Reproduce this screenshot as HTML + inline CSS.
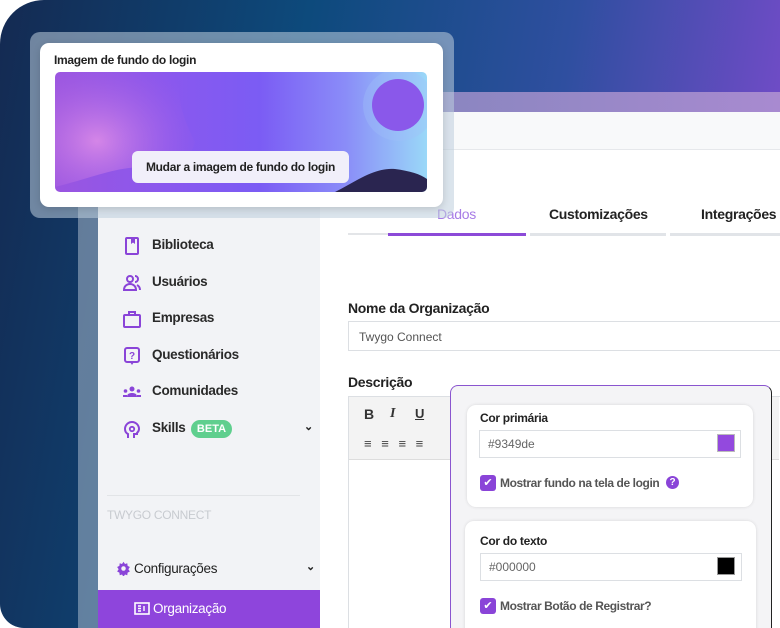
<!DOCTYPE html>
<html><head><meta charset="utf-8"><style>
*{box-sizing:border-box;margin:0;padding:0}
html,body{width:780px;height:628px;overflow:hidden}
body{background:#fff;font-family:"Liberation Sans",sans-serif;position:relative}
.bg{position:absolute;left:0;top:0;width:780px;height:628px;border-radius:44px 0 0 24px;background:linear-gradient(100deg,#142a52 0%,#0d4a7c 35%,#2f4fa0 65%,#8a4ad6 100%)}
.frame{position:absolute;left:78px;top:92px;width:702px;height:536px;background:rgba(200,210,225,.45)}
.band{position:absolute;left:98px;top:92px;width:682px;height:20px;background:linear-gradient(90deg,#6f8fb4,#8a86c0 50%,#a88ad0)}
.side{position:absolute;left:98px;top:112px;width:222px;height:516px;background:#f2f3f6}
.main{position:absolute;left:320px;top:112px;width:460px;height:516px;background:#fff}
.hdr{position:absolute;left:320px;top:112px;width:460px;height:38px;background:#f8f9fa;border-bottom:1px solid #e6e8eb}
.t{position:absolute;white-space:nowrap;color:#222;font-size:14px;font-weight:bold;letter-spacing:-0.3px}
.ico{position:absolute;left:122px;width:20px;height:20px}
.it{position:absolute;left:152px;font-size:13.5px;font-weight:bold;color:#2a2a2a;letter-spacing:-0.3px;white-space:nowrap}
.popout{position:absolute;left:30px;top:32px;width:424px;height:186px;border-radius:10px;background:rgba(190,205,220,.55)}
.pop{position:absolute;left:40px;top:43px;width:403px;height:164px;border-radius:9px;background:#fff;box-shadow:0 2px 8px rgba(0,0,0,.15)}
.img{position:absolute;left:55px;top:72px;width:372px;height:120px;border-radius:5px;overflow:hidden;background:linear-gradient(90deg,#9a55e0 0%,#8a58ee 30%,#7b5cf4 55%,#8a8cf8 78%,#9ad8f8 100%)}
.btn{position:absolute;left:132px;top:151px;width:217px;height:32px;border-radius:6px;background:#f1effa;font-size:12px;font-weight:bold;color:#222;text-align:center;line-height:32px;letter-spacing:-0.3px}
.inp{position:absolute;background:#fff;border:1px solid #dcdfe3;font-size:12px;color:#555}
.card{position:absolute;background:#fff;border-radius:9px;box-shadow:0 0 3px rgba(0,0,0,.12)}
.cb{position:absolute;width:16px;height:16px;border-radius:3px;background:#8a44d8;color:#fff;font-size:11px;text-align:center;line-height:16px}
</style></head><body>
<div class="bg"></div>
<div class="frame"></div>
<div class="band"></div>
<div class="side"></div>
<div class="main"></div>
<div class="hdr"></div>

<div class="t" style="left:437px;top:206px;color:#a77be6;font-weight:normal">Dados</div>
<div class="t" style="left:549px;top:206px">Customizações</div>
<div class="t" style="left:701px;top:206px">Integrações</div>
<div style="position:absolute;left:348px;top:233px;width:40px;height:2px;background:#e3e5e8"></div>
<div style="position:absolute;left:388px;top:233px;width:138px;height:3px;background:#8c4ad8"></div>
<div style="position:absolute;left:530px;top:233px;width:136px;height:3px;background:#e1e4e8"></div>
<div style="position:absolute;left:670px;top:233px;width:110px;height:3px;background:#e1e4e8"></div>

<svg class="ico" style="top:236px" viewBox="0 0 20 20"><rect x="4" y="2" width="12" height="16" rx="1" fill="none" stroke="#8a44d8" stroke-width="2"/><path d="M9 2v6l2-1.5 2 1.5V2" fill="#8a44d8"/></svg>
<div class="it" style="top:237px">Biblioteca</div>
<svg class="ico" style="top:273px" viewBox="0 0 20 20"><circle cx="8" cy="6" r="3" fill="none" stroke="#8a44d8" stroke-width="2"/><path d="M2 17c0-4 3-6 6-6s6 2 6 6z M13 3a3 3 0 010 6 M15 12c2 1 3 3 3 5" fill="none" stroke="#8a44d8" stroke-width="2"/></svg>
<div class="it" style="top:274px">Usuários</div>
<svg class="ico" style="top:309px" viewBox="0 0 20 20"><rect x="2" y="6" width="16" height="12" rx="1" fill="none" stroke="#8a44d8" stroke-width="2"/><path d="M7 6V3h6v3" fill="none" stroke="#8a44d8" stroke-width="2"/></svg>
<div class="it" style="top:310px">Empresas</div>
<svg class="ico" style="top:346px" viewBox="0 0 20 20"><rect x="3" y="2" width="14" height="14" rx="2" fill="none" stroke="#8a44d8" stroke-width="2"/><path d="M8 16l2 3 2-3" fill="#8a44d8"/><text x="10" y="13" font-size="10" text-anchor="middle" fill="#8a44d8" font-weight="bold" font-family="Liberation Sans">?</text></svg>
<div class="it" style="top:347px">Questionários</div>
<svg class="ico" style="top:382px" viewBox="0 0 20 20"><circle cx="10" cy="7" r="2.5" fill="#8a44d8"/><circle cx="3.5" cy="9" r="1.8" fill="#8a44d8"/><circle cx="16.5" cy="9" r="1.8" fill="#8a44d8"/><path d="M5 15c0-3 2-4 5-4s5 1 5 4z" fill="#8a44d8"/><rect x="1" y="13" width="4" height="2" fill="#8a44d8"/><rect x="15" y="13" width="4" height="2" fill="#8a44d8"/></svg>
<div class="it" style="top:383px">Comunidades</div>
<svg class="ico" style="top:420px" viewBox="0 0 20 20"><path d="M6 18v-4c-2-1-3-3-3-5a7 7 0 0114 0c0 2-1 3-2 4v1h-3v4" fill="none" stroke="#8a44d8" stroke-width="2"/><circle cx="10" cy="9" r="2.2" fill="none" stroke="#8a44d8" stroke-width="1.8"/></svg>
<div class="it" style="top:420px">Skills</div>
<div style="position:absolute;left:191px;top:420px;width:41px;height:18px;border-radius:9px;background:#5fcf8e;color:#fff;font-size:11px;font-weight:bold;text-align:center;line-height:18px">BETA</div>
<div class="t" style="left:304px;top:420px;font-size:11px">⌄</div>
<div style="position:absolute;left:107px;top:495px;width:193px;height:1px;background:#e2e4e7"></div>
<div class="t" style="left:107px;top:508px;font-size:12px;font-weight:normal;color:#c8cbd0">TWYGO CONNECT</div>
<svg style="position:absolute;left:116px;top:561px" width="15" height="15" viewBox="0 0 20 20"><path d="M10 1l2 3 3-1 .5 3.5 3 1.5-2 3 2 3-3 1.5-.5 3.5-3-1-2 3-2-3-3 1-.5-3.5-3-1.5 2-3-2-3 3-1.5L5 3l3 1z" fill="#8a44d8"/><circle cx="10" cy="10" r="3" fill="#f2f3f6"/></svg>
<div class="it" style="left:134px;top:561px;font-weight:normal;color:#222">Configurações</div>
<div class="t" style="left:306px;top:560px;font-size:11px">⌄</div>
<div style="position:absolute;left:98px;top:590px;width:222px;height:38px;background:#8e45dc"></div>
<svg style="position:absolute;left:134px;top:602px" width="16" height="13" viewBox="0 0 16 13"><rect x="1" y="1" width="14" height="11" fill="none" stroke="#fff" stroke-width="1.6"/><path d="M4 4h3M4 6.5h3M4 9h3M10 4v5" stroke="#fff" stroke-width="1.4"/></svg>
<div class="it" style="left:153px;top:601px;font-weight:normal;color:#fff">Organização</div>

<div class="t" style="left:348px;top:300px">Nome da Organização</div>
<div class="inp" style="left:348px;top:321px;width:440px;height:30px;padding:8px 10px">Twygo Connect</div>
<div class="t" style="left:348px;top:374px">Descrição</div>
<div class="inp" style="left:348px;top:396px;width:440px;height:240px"></div>
<div style="position:absolute;left:349px;top:397px;width:430px;height:63px;background:#f3f3f3;border-bottom:1px solid #ddd"></div>
<div class="t" style="left:364px;top:406px;font-size:14px;color:#333">B</div>
<div class="t" style="left:390px;top:406px;font-size:14px;color:#333;font-style:italic;font-family:'Liberation Serif',serif">I</div>
<div class="t" style="left:415px;top:406px;font-size:13px;color:#333;text-decoration:underline">U</div>
<div class="t" style="left:364px;top:436px;font-size:13px;color:#444">≡&nbsp;&nbsp;&nbsp;≡&nbsp;&nbsp;&nbsp;≡&nbsp;&nbsp;&nbsp;≡</div>

<div style="position:absolute;left:450px;top:385px;width:322px;height:260px;border:1px solid #8a55cf;border-radius:8px;background:#f4f4f6;border-right-color:#222"></div>
<div class="card" style="left:467px;top:405px;width:286px;height:102px"></div>
<div class="t" style="left:480px;top:411px;font-size:12px">Cor primária</div>
<div class="inp" style="left:479px;top:430px;width:262px;height:28px;padding:6px 8px;color:#666">#9349de</div>
<div style="position:absolute;left:717px;top:434px;width:18px;height:18px;border:1px solid #bbb;background:#9349de"></div>
<div class="cb" style="left:480px;top:475px">✔</div>
<div class="t" style="left:500px;top:476px;font-size:12px;color:#555;letter-spacing:-0.4px">Mostrar fundo na tela de login</div>
<div style="position:absolute;left:666px;top:476px;width:13px;height:13px;border-radius:50%;background:#8a44d8;color:#fff;font-size:10px;font-weight:bold;text-align:center;line-height:13px">?</div>
<div class="card" style="left:465px;top:521px;width:291px;height:120px"></div>
<div class="t" style="left:480px;top:534px;font-size:12px">Cor do texto</div>
<div class="inp" style="left:480px;top:553px;width:262px;height:28px;padding:6px 8px;color:#666">#000000</div>
<div style="position:absolute;left:717px;top:557px;width:18px;height:18px;border:1px solid #999;background:#000"></div>
<div class="cb" style="left:480px;top:598px">✔</div>
<div class="t" style="left:500px;top:599px;font-size:12px;color:#555;letter-spacing:-0.4px">Mostrar Botão de Registrar?</div>

<div class="popout"></div>
<div class="pop"></div>
<div class="t" style="left:54px;top:53px;font-size:12px">Imagem de fundo do login</div>
<div class="img">
<svg width="372" height="120" viewBox="0 0 372 120" style="position:absolute;left:0;top:0">
<defs><radialGradient id="g" cx="0.3" cy="0.6" r="0.8"><stop offset="0" stop-color="#f09ae8"/><stop offset="1" stop-color="#9a55e0" stop-opacity="0"/></radialGradient></defs>
<path d="M0 0h130c-10 20-5 40 10 70-5 20-25 30-50 25-30 0-50 10-90 20z" fill="url(#g)" opacity=".7"/>
<circle cx="344" cy="33" r="36" fill="#a0c0fa" opacity=".35"/>
<circle cx="343" cy="33" r="26" fill="#8a58ea"/>
<path d="M280 120c20-10 40-25 60-23 15 2 25 5 32 10v13z" fill="#2a2550"/>
</svg>
</div>
<div class="btn">Mudar a imagem de fundo do login</div>
</body></html>
